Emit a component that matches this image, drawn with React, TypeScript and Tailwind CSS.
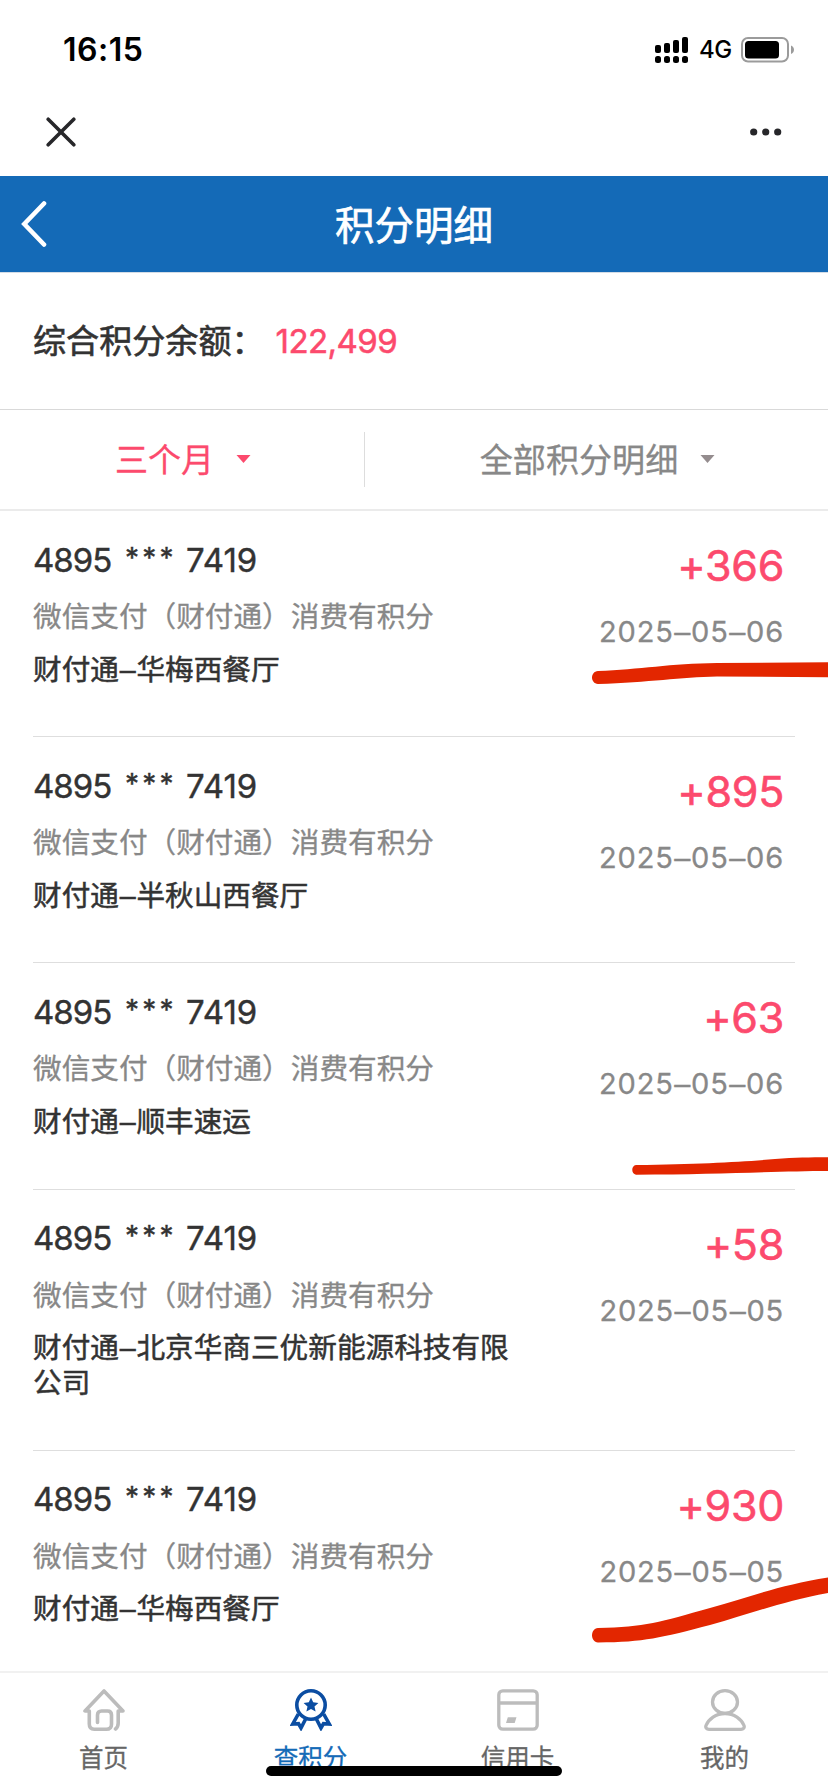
import React, { useState } from 'react'

const records = [
  { id: 1, head: '4895', tail: '7419', merchant: '华梅西餐厅', points: 366, date: '2025-05-06' },
  { id: 2, head: '4895', tail: '7419', merchant: '半秋山西餐厅', points: 895, date: '2025-05-06' },
  { id: 3, head: '4895', tail: '7419', merchant: '顺丰速运', points: 63, date: '2025-05-06' },
  { id: 4, head: '4895', tail: '7419', merchant: '北京华商三优新能源科技有限公司', points: 58, date: '2025-05-05' },
  { id: 5, head: '4895', tail: '7419', merchant: '华梅西餐厅', points: 930, date: '2025-05-05' },
]

function StatusBar() {
  return (
    <div className="h-[88px] shrink-0 flex items-center justify-between pt-[12px] pl-[63px] pr-[33px] text-black">
      <div className="text-[32px] font-semibold tracking-[0.5px] leading-[40px]">16:15</div>
      <div className="flex items-center">
        <svg width="34" height="26" viewBox="0 0 34 26" fill="#000">
          <rect x="0" y="8" width="6" height="8" rx="2" />
          <rect x="9" y="6" width="6" height="10" rx="2" />
          <rect x="18" y="3" width="6" height="13" rx="2" />
          <rect x="27" y="0" width="6" height="16" rx="2" />
          <rect x="0" y="19" width="6" height="7" rx="2.5" />
          <rect x="9" y="19" width="6" height="7" rx="2.5" />
          <rect x="18" y="19" width="6" height="7" rx="2.5" />
          <rect x="27" y="19" width="6" height="7" rx="2.5" />
        </svg>
        <span className="ml-[10px] w-[42px] text-[24px] font-medium leading-[26px] tracking-[-0.5px]">4G</span>
        <svg width="54" height="26" viewBox="0 0 54 26">
          <rect x="1" y="1" width="46" height="23.5" rx="6" fill="none" stroke="#9b9b9b" strokeWidth="2" />
          <rect x="4" y="4" width="34" height="17.5" rx="3.5" fill="#000" />
          <path d="M50 8.500c4 1.500 4 7 0 8.500z" fill="#9b9b9b" />
        </svg>
      </div>
    </div>
  )
}

function Caret({ color }: { color: string }) {
  return (
    <svg width="15" height="8" viewBox="0 0 15 8" fill={color}>
      <path d="M0.500 0h14L7.500 8z" />
    </svg>
  )
}

function Dash() {
  return <span className="inline-block w-[17.500px] leading-[20px] tracking-normal text-center font-['Liberation_Sans',sans-serif]">–</span>
}

function HomeIcon() {
  return (
    <svg width="42" height="42" viewBox="0 0 42 42" fill="none" stroke="#bcbcbc" strokeWidth="3.600" strokeLinecap="round" strokeLinejoin="round">
      <path d="M32.500 40c2-1.500 2.700-3.500 2.700-6V22H40L21 2 2 22h4.300v13c0 3.500 2 5.200 5 5.200h12c3.500 0 5.200-2 5.200-5V26c0-2.500-1.500-4-4-4h-6c-2.500 0-4 1.500-4 4v7.500" />
    </svg>
  )
}

function MedalIcon() {
  return (
    <svg width="42" height="42" viewBox="0 0 42 42" fill="none" stroke="#0b4da2" strokeWidth="3.600">
      <circle cx="21" cy="16" r="14.200" />
      <path d="M8.300 25L2.800 35l5.700-.3L11 39l5-9.800M33.700 25L39.200 35l-5.700-.3L31 39l-5-9.800" />
      <path d="M21 8.500l2.200 4.800 5.200.6-3.900 3.500 1.100 5.100-4.600-2.600-4.600 2.600 1.100-5.100-3.900-3.500 5.200-.6z" fill="#0b4da2" stroke="none" />
    </svg>
  )
}

function CardIcon() {
  return (
    <svg width="42" height="42" viewBox="0 0 42 42" fill="none" stroke="#bcbcbc" strokeWidth="3.300">
      <rect x="1.800" y="1.800" width="38.400" height="38.400" rx="4" />
      <path d="M2 14h38" />
      <path d="M10.800 28.300h8.700l-1.800 5.700H9z" fill="#bcbcbc" stroke="none" />
    </svg>
  )
}

function UserIcon() {
  return (
    <svg width="42" height="42" viewBox="0 0 42 42" fill="none" stroke="#bcbcbc" strokeWidth="3.300">
      <ellipse cx="21" cy="13" rx="12.500" ry="11.300" />
      <path d="M21 24.500c-9 0-16.500 5.500-19 12-.8 2.300.6 3.800 3 3.800h32c2.400 0 3.800-1.500 3-3.800-2.500-6.500-10-12-19-12z" />
    </svg>
  )
}

const tabs = [
  { name: '首页', icon: <HomeIcon /> },
  { name: '查积分', icon: <MedalIcon /> },
  { name: '信用卡', icon: <CardIcon /> },
  { name: '我的', icon: <UserIcon /> },
]

// hand-drawn red marker strokes over the list
function Marks() {
  return (
    <svg className="absolute left-0 top-0 pointer-events-none" width="828" height="1792" viewBox="0 0 828 1792" fill="#e32600">
      <path d="M598 671C640 669.500 670 663.500 717 663L828 662.300V677.300L717 676.500C680 677 650 682.500 598 684C590 683.500 590 671.500 598 671z" />
      <path d="M636 1165C700 1164 740 1162 775 1159C795 1157.500 810 1157.300 828 1157.300V1171C780 1171 720 1174.700 636 1174.700C631 1174 631 1165.500 636 1165z" />
      <path d="M598 1628C645 1627 660 1622 710 1608C750 1597 780 1585 828 1577.500V1593C780 1602 750 1614 710 1625C660 1638 645 1642 598 1642.500C590 1642 590 1628.500 598 1628z" />
    </svg>
  )
}

export default function App() {
  const [active, setActive] = useState('查积分')
  return (
    <div className="relative w-[828px] h-[1792px] overflow-hidden bg-white flex flex-col font-['Inter','Noto_Sans_CJK_SC',sans-serif] text-[#333333]">
      <StatusBar />
      <div className="h-[88px] shrink-0 flex items-center justify-between pl-[46px] pr-[46px]">
        <svg width="30" height="30" viewBox="0 0 30 30" stroke="#27272a" strokeWidth="3.600" strokeLinecap="round">
          <path d="M2.200 2.200l25.600 25.600M27.800 2.200L2.200 27.800" />
        </svg>
        <svg width="32" height="8" viewBox="0 0 32 8" fill="#27272a">
          <circle cx="3.700" cy="4" r="3.600" />
          <circle cx="15.700" cy="4" r="3.600" />
          <circle cx="27.700" cy="4" r="3.600" />
        </svg>
      </div>

      <div className="h-[96px] shrink-0 bg-[#146ab7] text-white grid grid-cols-[80px_1fr_80px] items-center">
        <svg className="ml-[21px]" width="26" height="46" viewBox="0 0 26 46" fill="none" stroke="#fff" strokeWidth="4.600" strokeLinecap="round">
          <path d="M23 2.500L3.300 23 23 43.500" />
        </svg>
        <h1 className="pt-[4px] text-center text-[39.500px] leading-[48px] [-webkit-text-stroke:0.700px]">积分明细</h1>
      </div>

      <div className="h-[138px] shrink-0 border-t border-t-[#d3dce6] border-b border-b-[#d9d9d9] flex items-center pt-[2px] pl-[33px] text-[33.100px]">
        <span className="[-webkit-text-stroke:0.600px]">综合积分余额：</span>
        <span className="ml-[11px] text-[#fc4a6d] tracking-[-0.600px] [-webkit-text-stroke:0.500px]">122,499</span>
      </div>

      <div className="h-[101px] shrink-0 border-b-2 border-[#ebebeb] flex items-center text-[33.100px] [-webkit-text-stroke:0.300px]">
        <button className="w-[364px] flex items-center justify-center gap-[22px] pl-[2px] text-[#fc4a6d]">
          <span className="pt-[2px]">三个月</span> <Caret color="#fc4a6d" />
        </button>
        <div className="w-px h-[55px] bg-[#dddddd]" />
        <button className="flex-1 flex items-center justify-center gap-[22px] pl-[2px] text-[#888888]">
          <span className="pt-[2px]">全部积分明细</span> <Caret color="#948c8e" />
        </button>
      </div>

      <div className="flex-1 overflow-hidden px-[33px]">
        {records.map(r => (
          <div key={r.id} className="flex justify-between border-b border-[#dedede] last:border-b-0 pb-[49.700px]">
            <div className="w-[484px] pt-[28.500px]">
              <div className="h-[40px] leading-[40px] flex text-[33px] [-webkit-text-stroke:0.400px]">
                <span className="w-[92px] tracking-[-1px]">{r.head}</span>
                <span className="w-[61px] text-[28px] leading-[36px] tracking-[3.200px]">***</span>
                <span>{r.tail}</span>
              </div>
              <div className="mt-[17.500px] h-[40px] leading-[40px] text-[28.650px] text-[#888888] whitespace-nowrap [-webkit-text-stroke:0.300px]">微信支付（财付通）消费有积分</div>
              <div className="mt-[14.500px] leading-[35px] text-[28.650px] [-webkit-text-stroke:0.500px]">财付通<Dash />{r.merchant}</div>
            </div>
            <div className="pt-[30px] pr-[11px] text-right">
              <div className="h-[48px] leading-[48px] text-[43px] text-[#fc4a6d] tracking-[-0.300px] [-webkit-text-stroke:0.600px]">+{r.points}</div>
              <div className="mt-[23px] h-[40px] leading-[40px] text-[29px] text-[#888888] tracking-[0.800px] [-webkit-text-stroke:0.300px]">
                {r.date.split('-').map((part, i) => (
                  <React.Fragment key={i}>{i > 0 && <Dash />}{part}</React.Fragment>
                ))}
              </div>
            </div>
          </div>
        ))}
      </div>

      <div className="h-[121px] shrink-0 border-t-2 border-[#f1f1f1] bg-white grid grid-cols-4">
        {tabs.map(t => (
          <button key={t.name} onClick={() => setActive(t.name)} className="flex flex-col items-center pt-[16px] [-webkit-text-stroke:0.300px]">
            {t.icon}
            <span className={t.name === active ? 'mt-[9px] leading-[36px] text-[24.500px] text-[#146ab7]' : 'mt-[9px] leading-[36px] text-[24.500px] text-[#666666]'}>{t.name}</span>
          </button>
        ))}
      </div>

      <Marks />
      <div className="absolute left-[266px] top-[1766px] w-[296px] h-[10px] rounded-full bg-black" />
    </div>
  )
}
